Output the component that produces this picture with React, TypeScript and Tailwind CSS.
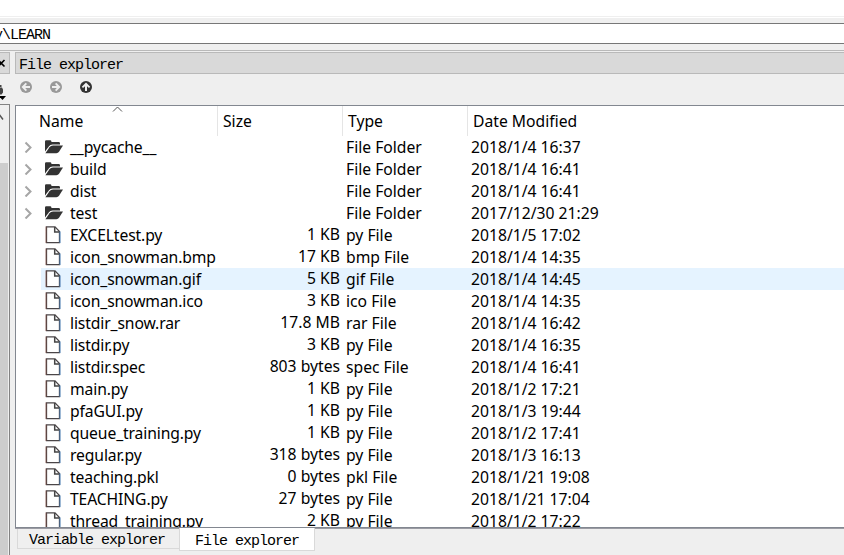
type Row = { name: string; size: string; type: string; date: string; hover?: boolean };

const ROWS: Row[] = [
  { name: "__pycache__", size: "", type: "File Folder", date: "2018/1/4 16:37" },
  { name: "build", size: "", type: "File Folder", date: "2018/1/4 16:41" },
  { name: "dist", size: "", type: "File Folder", date: "2018/1/4 16:41" },
  { name: "test", size: "", type: "File Folder", date: "2017/12/30 21:29" },
  { name: "EXCELtest.py", size: "1 KB", type: "py File", date: "2018/1/5 17:02" },
  { name: "icon_snowman.bmp", size: "17 KB", type: "bmp File", date: "2018/1/4 14:35" },
  { name: "icon_snowman.gif", size: "5 KB", type: "gif File", date: "2018/1/4 14:45", hover: true },
  { name: "icon_snowman.ico", size: "3 KB", type: "ico File", date: "2018/1/4 14:35" },
  { name: "listdir_snow.rar", size: "17.8 MB", type: "rar File", date: "2018/1/4 16:42" },
  { name: "listdir.py", size: "3 KB", type: "py File", date: "2018/1/4 16:35" },
  { name: "listdir.spec", size: "803 bytes", type: "spec File", date: "2018/1/4 16:41" },
  { name: "main.py", size: "1 KB", type: "py File", date: "2018/1/2 17:21" },
  { name: "pfaGUI.py", size: "1 KB", type: "py File", date: "2018/1/3 19:44" },
  { name: "queue_training.py", size: "1 KB", type: "py File", date: "2018/1/2 17:41" },
  { name: "regular.py", size: "318 bytes", type: "py File", date: "2018/1/3 16:13" },
  { name: "teaching.pkl", size: "0 bytes", type: "pkl File", date: "2018/1/21 19:08" },
  { name: "TEACHING.py", size: "27 bytes", type: "py File", date: "2018/1/21 17:04" },
  { name: "thread_training.py", size: "2 KB", type: "py File", date: "2018/1/2 17:22" },
];

const MONO = "font-['Liberation_Mono',monospace] text-[15px] tracking-[-1px] whitespace-pre text-black";

function FolderIcon() {
  return (
    <svg width="18" height="14" viewBox="0 0 18 14" fill="#333">
      <path d="M0 11.500V1.400Q0 .2 1.200.2h4q1 0 1.200 1v.8h7.200q1.400 0 1.400 1.300v1.200H7.600Q5 4.500 3.800 6.400Z" />
      <path d="M.4 13.200 4.500 7.300Q5.800 5.500 8 5.500h10l-4 6.300q-.9 1.400-2.600 1.400Z" />
    </svg>
  );
}

function FileIcon() {
  return (
    <svg width="16" height="18" viewBox="0 0 16 18" fill="none">
      <path d="M1.500 .9H10L14.500 5.500V16.600H1.500Z" fill="#fff" stroke="#4b4648" strokeWidth="1.300" />
      <path d="M1 .5v16.500" stroke="#8a4a3c" strokeWidth=".6" />
      <path d="M9.700 1v5h5" stroke="#444" strokeWidth="1.500" />
      <path d="M15 5.500v11.500" stroke="#4a86c4" strokeWidth=".9" />
    </svg>
  );
}

function ArrowCircle({ color, turn }: { color: string; turn: string }) {
  return (
    <svg width="12" height="12" viewBox="0 0 12 12" className={turn}>
      <circle cx="6" cy="6" r="6" fill={color} />
      <path d="M6 1.500 10.200 5.700 9 7 7 5.200V10H5V5.200L3 7 1.800 5.700Z" fill="#efefef" />
      <path d="M6 2.900 6 2.900 9 5.900 6 2.900Z" fill={color} />
    </svg>
  );
}

function LeftDock() {
  return (
    <div className="flex w-[10px] shrink-0 flex-col overflow-hidden">
      <div className="flex h-[22px] items-center border-y border-r border-[#b9b9b9] bg-[#d9d9d9]">
        <svg width="9" height="20" viewBox="0 0 9 20" stroke="#000" strokeWidth="1.600">
          <path d="M-2 7 4.500 13.500M-2 13.500 4.500 7" />
        </svg>
      </div>
      <div className="h-[30px]">
        <svg width="10" height="30" viewBox="0 0 10 30">
          <path d="M0 11h1.500v2H0zM0 13.500h2l1 2v3l-1.500 2H0z" fill="#444" />
          <path d="M-1 22h7l-3.500 4z" fill="#000" />
        </svg>
      </div>
      <div className="flex flex-1 flex-col border-t border-r border-[#828282] bg-[#efefef]">
        <svg width="8" height="58" viewBox="0 0 8 58" fill="none" stroke="#555" strokeWidth="1.500">
          <path d="M-3 14.500 0 10.500 3 14.500" />
        </svg>
        <div className="w-[8px] flex-1 bg-[#cdcdcd]" />
      </div>
    </div>
  );
}

function FileTree() {
  return (
    <div className="h-[423px] shrink-0 overflow-hidden border-t border-b border-l border-[#828790] bg-white font-['Noto_Sans',sans-serif] text-[15.7px] text-black">
      <div className="relative flex h-[30px] leading-[30px]">
        <div className="w-[202px] border-r border-[#e5e5e5] pl-[23px]">Name</div>
        <div className="w-[125px] border-r border-[#e5e5e5] pl-[5px]">Size</div>
        <div className="w-[125px] border-r border-[#e5e5e5] pl-[5px]">Type</div>
        <div className="pl-[5px]">Date Modified</div>
        <svg className="absolute left-[96px] top-0" width="11" height="6" viewBox="0 0 11 6" fill="none" stroke="#555">
          <path d="M1 5.500 5.500 1 10 5.500" />
        </svg>
      </div>
      {ROWS.map((row) => {
        const folder = row.type === "File Folder";
        return (
          <div key={row.name} className="flex h-[22px] leading-[22px] whitespace-pre">
            <div className="flex w-[25px] shrink-0 items-center pl-[8px]">
              {folder && (
                <svg width="9" height="12" viewBox="0 0 9 12" fill="none" stroke="#a6a6a6" strokeWidth="2">
                  <path d="M1.500 1.500 6.500 6.500l-5 5" />
                </svg>
              )}
            </div>
            <div className={row.hover ? "flex flex-1 bg-[#e5f3ff]" : "flex flex-1"}>
              <div className="flex w-[29px] shrink-0 items-center pl-[4px]">{folder ? <FolderIcon /> : <FileIcon />}</div>
              <div className="w-[147px] shrink-0 tracking-[-0.12px]">{row.name}</div>
              <div className="-mt-px w-[123px] shrink-0 text-right">{row.size}</div>
              <div className="w-[125px] shrink-0 pl-[6px]">{row.type}</div>
              <div className="pl-[6px]">{row.date}</div>
            </div>
          </div>
        );
      })}
    </div>
  );
}

export default function App() {
  return (
    <div className="flex h-[555px] w-[844px] flex-col overflow-hidden bg-[#efefef]">
      <div className="h-[16px] shrink-0 bg-white" />
      <div className="mt-px h-px shrink-0 bg-white" />
      <div className="mt-[5px] flex h-[21px] shrink-0 items-center overflow-hidden border-y border-[#777] bg-white">
        <div className={`${MONO} -ml-[6px] leading-[19px] pt-[3px]`}>y\LEARN</div>
      </div>
      <div className="mt-[6px] h-px shrink-0 bg-[#b9b9b9]" />
      <div className="mt-px flex min-h-0 flex-1 gap-[5px]">
        <LeftDock />
        <div className="flex min-w-0 flex-1 flex-col">
          <div className={`${MONO} h-[22px] shrink-0 border-y border-l border-[#b9b9b9] bg-[#d9d9d9] pl-[3px] leading-[25px]`}>
            File explorer
          </div>
          <div className="flex h-[31px] shrink-0 gap-[18px] pt-[7px] pl-[5px]">
            <ArrowCircle color="#999" turn="-rotate-90" />
            <ArrowCircle color="#999" turn="rotate-90" />
            <ArrowCircle color="#333" turn="rotate-0" />
          </div>
          <FileTree />
          <div className="h-px shrink-0 bg-[#9b9ba3]" />
          <div className="flex flex-1 items-start pl-[2px]">
            <div className={`${MONO} h-[20px] w-[162px] border-b border-l border-[#d9d9d9] pl-[11px] leading-[23px]`}>
              Variable explorer
            </div>
            <div className={`${MONO} -mt-px h-[23px] w-[136px] border-r border-b border-l border-[#d9d9d9] bg-white pl-[15px] leading-[27px]`}>
              File explorer
            </div>
          </div>
        </div>
      </div>
    </div>
  );
}
